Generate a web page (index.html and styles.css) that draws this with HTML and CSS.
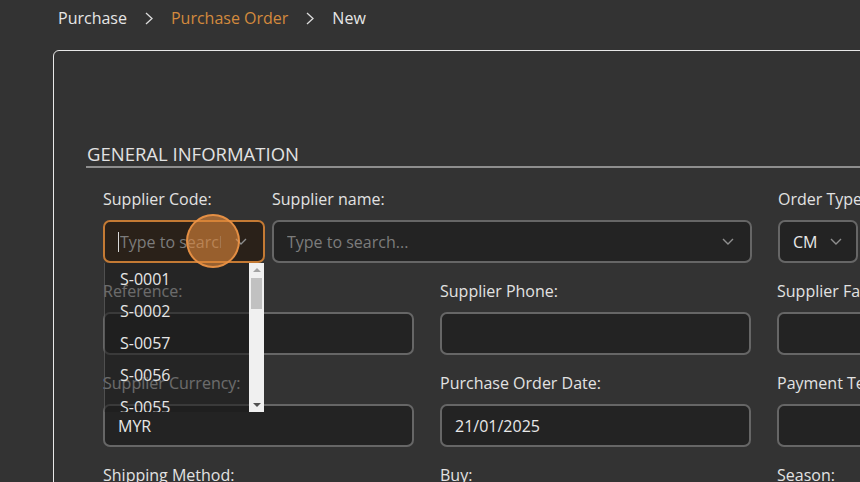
FILE: index.html
```html
<!DOCTYPE html>
<html lang="en">
<head>
<meta charset="utf-8">
<title>Purchase Order - New</title>
<link rel="stylesheet" href="styles.css">
</head>
<body>
<nav class="breadcrumb">
  <span class="crumb">Purchase</span>
  <svg class="sep" width="8" height="13" viewBox="0 0 8 13"><polyline points="1,1 7,6.5 1,12" fill="none" stroke="#dcdcdc" stroke-width="1.3"/></svg>
  <span class="crumb crumb-active">Purchase Order</span>
  <svg class="sep" width="8" height="13" viewBox="0 0 8 13"><polyline points="1,1 7,6.5 1,12" fill="none" stroke="#dcdcdc" stroke-width="1.3"/></svg>
  <span class="crumb">New</span>
</nav>

<main class="card">
  <h2 class="section-title">GENERAL INFORMATION</h2>
  <div class="form">
    <div class="row-first">
      <div class="field field-code">
        <label class="label">Supplier Code:</label>
        <div class="combo">
          <div class="control control-focus">
            <span class="caret"></span>
            <span class="placeholder clip">Type to search...</span>
            <svg class="chev" width="12" height="7" viewBox="0 0 12 7"><polyline points="1,1 6,6 11,1" fill="none" stroke="#8f8f8f" stroke-width="1.4"/></svg>
          </div>
          <div class="list">
            <div class="items">
              <div class="item">S-0001</div>
              <div class="item">S-0002</div>
              <div class="item">S-0057</div>
              <div class="item">S-0056</div>
              <div class="item">S-0055</div>
            </div>
            <div class="scrollbar">
              <div class="sb-btn"><span class="tri-up"></span></div>
              <div class="sb-thumb"></div>
              <div class="sb-track"></div>
              <div class="sb-btn"><span class="tri-down"></span></div>
            </div>
          </div>
          <div class="click-dot"></div>
        </div>
      </div>
      <div class="field field-name">
        <label class="label">Supplier name:</label>
        <div class="control">
          <span class="placeholder clip">Type to search...</span>
          <svg class="chev" width="12" height="7" viewBox="0 0 12 7"><polyline points="1,1 6,6 11,1" fill="none" stroke="#8f8f8f" stroke-width="1.4"/></svg>
        </div>
      </div>
      <div class="field field-type">
        <label class="label">Order Type:</label>
        <div class="control control-type">
          <span class="value">CM</span>
          <svg class="chev" width="12" height="7" viewBox="0 0 12 7"><polyline points="1,1 6,6 11,1" fill="none" stroke="#8f8f8f" stroke-width="1.4"/></svg>
        </div>
      </div>
    </div>

    <div class="row">
      <div class="field"><label class="label">Reference:</label><div class="control"></div></div>
      <div class="field"><label class="label">Supplier Phone:</label><div class="control"></div></div>
      <div class="field"><label class="label">Supplier Fax:</label><div class="control"></div></div>
    </div>

    <div class="row">
      <div class="field"><label class="label">Supplier Currency:</label><div class="control"><span class="value">MYR</span></div></div>
      <div class="field"><label class="label">Purchase Order Date:</label><div class="control"><span class="value">21/01/2025</span></div></div>
      <div class="field"><label class="label">Payment Terms:</label><div class="control"></div></div>
    </div>

    <div class="row">
      <div class="field"><label class="label">Shipping Method:</label><div class="control"></div></div>
      <div class="field"><label class="label">Buy:</label><div class="control"></div></div>
      <div class="field"><label class="label">Season:</label><div class="control"></div></div>
    </div>
  </div>
</main>
</body>
</html>
```

FILE: styles.css
```css
html, body {
  margin: 0;
  padding: 0;
}
body {
  background: #333333;
  font-family: "Open Sans", "Noto Sans", sans-serif;
  color: #e3e3e3;
  width: 860px;
  height: 482px;
  overflow: hidden;
}

.breadcrumb {
  display: flex;
  align-items: center;
  gap: 18px;
  height: 36px;
  padding-left: 58px;
  font-size: 16px;
  line-height: 22px;
}
.crumb { color: #e6e6e6; }
.crumb-active { color: #d38a3d; }
.sep { display: block; }

.card {
  display: block;
  margin: 14px 0 0 53px;
  width: 1000px;
  height: 700px;
  box-sizing: border-box;
  border: 1px solid #e8e8e8;
  border-radius: 6px;
  padding: 90px 0 0 32px;
}

.section-title {
  margin: 0 0 20px 0;
  padding-left: 1px;
  font-size: 18.5px;
  font-weight: 400;
  line-height: 25px;
  color: #e2e2e2;
  border-bottom: 2px solid #8e8e8e;
}

.form {
  padding-left: 17px;
  display: flex;
  flex-direction: column;
  gap: 17px;
}

.row-first {
  display: flex;
}
.field-code { width: 162px; margin-right: 7px; }
.field-name { width: 480px; margin-right: 26px; }
.field-type { width: 80px; }

.row {
  display: grid;
  grid-template-columns: 311px 311px 311px;
  column-gap: 26px;
}

.field {
  display: flex;
  flex-direction: column;
  gap: 9px;
}
.label {
  font-size: 16px;
  line-height: 23px;
  color: #e2e2e2;
  white-space: nowrap;
}

.control {
  height: 43px;
  box-sizing: border-box;
  border: 2px solid #666666;
  border-radius: 7px;
  background: #232323;
  display: flex;
  align-items: center;
  gap: 14px;
  padding: 0 16px 0 13px;
  font-size: 16px;
}
.control-focus {
  border-color: #c47a34;
  background: #2a2119;
  gap: 0;
}
.control-type {
  justify-content: space-between;
  gap: 0;
  padding-right: 14px;
}
.clip {
  flex: 1;
  min-width: 0;
  overflow: hidden;
  white-space: nowrap;
}
.placeholder { color: #7c7c7c; }
.control-focus .placeholder { margin-right: 14px; }
.value { color: #e8e8e8; white-space: nowrap; }
.chev { flex: none; display: block; }
.caret {
  flex: none;
  width: 1px;
  height: 20px;
  background: #d8d8d8;
  margin-right: 1px;
}

.combo { position: relative; }

.list {
  position: absolute;
  top: 100%;
  left: 1px;
  width: 160px;
  height: 149px;
  display: flex;
  background: rgba(28, 28, 28, 0.6);
  box-shadow: inset 1px 0 0 rgba(110, 110, 110, 0.6);
  z-index: 5;
  overflow: hidden;
}
.items {
  flex: 1;
  min-width: 0;
}
.item {
  height: 32px;
  line-height: 33px;
  padding-left: 16px;
  font-size: 16px;
  color: #e6e6e6;
}
.scrollbar {
  flex: none;
  width: 15px;
  background: #f0f0f0;
  display: flex;
  flex-direction: column;
}
.sb-btn {
  height: 14px;
  display: flex;
  align-items: center;
  justify-content: center;
}
.tri-up {
  width: 0;
  height: 0;
  border-left: 4px solid transparent;
  border-right: 4px solid transparent;
  border-bottom: 4px solid #a3a3a3;
}
.tri-down {
  width: 0;
  height: 0;
  border-left: 4px solid transparent;
  border-right: 4px solid transparent;
  border-top: 4px solid #505050;
}
.sb-thumb {
  height: 31px;
  margin: 1px 2px 0;
  background: #c1c1c1;
}
.sb-track { flex: 1; }

.click-dot {
  position: absolute;
  left: 83px;
  top: -6px;
  width: 54px;
  height: 54px;
  box-sizing: border-box;
  border-radius: 50%;
  background: rgba(226, 136, 58, 0.6);
  border: 2px solid rgba(236, 148, 70, 0.9);
  z-index: 6;
}
```
